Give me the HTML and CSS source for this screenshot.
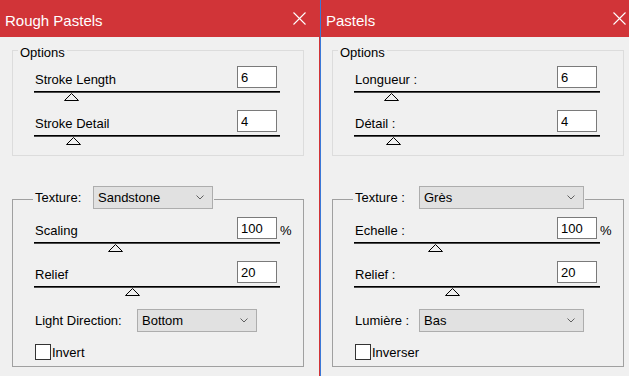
FILE: index.html
```html
<!DOCTYPE html>
<html lang="en">
<head>
  <meta charset="UTF-8">
  <meta name="viewport" content="width=device-width, initial-scale=1.0">
  <title>Rough Pastels</title>
  <link rel="stylesheet" href="styles.css">
</head>
<body>
  <div class="desktop">

    <!-- English dialog -->
    <section class="window">
      <header class="titlebar">
        <span class="title">Rough Pastels</span>
        <svg class="close" width="13" height="13" viewBox="0 0 13 13"><path d="M0.5 0.5 L12.5 12.5 M12.5 0.5 L0.5 12.5"/></svg>
      </header>
      <div class="window-body">
        <fieldset class="group">
          <legend class="group-title">Options</legend>
          <div class="field">
            <span class="field-label">Stroke Length</span>
            <input class="num" type="text" value="6">
          </div>
          <div class="slider">
            <div class="track"></div>
            <svg class="thumb" style="margin-left: 30px" viewBox="0 0 15 8"><polygon points="0.5,7.5 7.5,0.5 14.5,7.5"/></svg>
          </div>
          <div class="field">
            <span class="field-label">Stroke Detail</span>
            <input class="num" type="text" value="4">
          </div>
          <div class="slider">
            <div class="track"></div>
            <svg class="thumb" style="margin-left: 32px" viewBox="0 0 15 8"><polygon points="0.5,7.5 7.5,0.5 14.5,7.5"/></svg>
          </div>
        </fieldset>

        <fieldset class="group group--texture">
          <legend class="group-head">
            <div class="combo-row">
              <span class="combo-label label-texture">Texture:</span>
              <div class="combo">
                <span>Sandstone</span>
                <svg class="chevron" viewBox="0 0 8 5"><polyline points="0.5,0.5 4,4 7.5,0.5"/></svg>
              </div>
            </div>
          </legend>
          <div class="field">
            <span class="field-label">Scaling</span>
            <input class="num" type="text" value="100">
            <span class="unit">%</span>
          </div>
          <div class="slider">
            <div class="track"></div>
            <svg class="thumb" style="margin-left: 74px" viewBox="0 0 15 8"><polygon points="0.5,7.5 7.5,0.5 14.5,7.5"/></svg>
          </div>
          <div class="field">
            <span class="field-label">Relief</span>
            <input class="num" type="text" value="20">
          </div>
          <div class="slider">
            <div class="track"></div>
            <svg class="thumb" style="margin-left: 91px" viewBox="0 0 15 8"><polygon points="0.5,7.5 7.5,0.5 14.5,7.5"/></svg>
          </div>
          <div class="combo-row light-row">
            <span class="combo-label label-light">Light Direction:</span>
            <div class="combo">
              <span>Bottom</span>
              <svg class="chevron" viewBox="0 0 8 5"><polyline points="0.5,0.5 4,4 7.5,0.5"/></svg>
            </div>
          </div>
          <label class="check"><span class="box"></span>Invert</label>
        </fieldset>
      </div>
    </section>

    <!-- French dialog -->
    <section class="window window--fr">
      <header class="titlebar">
        <span class="title">Pastels</span>
        <svg class="close" width="13" height="13" viewBox="0 0 13 13"><path d="M0.5 0.5 L12.5 12.5 M12.5 0.5 L0.5 12.5"/></svg>
      </header>
      <div class="window-body">
        <fieldset class="group">
          <legend class="group-title">Options</legend>
          <div class="field">
            <span class="field-label">Longueur :</span>
            <input class="num" type="text" value="6">
          </div>
          <div class="slider">
            <div class="track"></div>
            <svg class="thumb" style="margin-left: 30px" viewBox="0 0 15 8"><polygon points="0.5,7.5 7.5,0.5 14.5,7.5"/></svg>
          </div>
          <div class="field">
            <span class="field-label">Détail :</span>
            <input class="num" type="text" value="4">
          </div>
          <div class="slider">
            <div class="track"></div>
            <svg class="thumb" style="margin-left: 32px" viewBox="0 0 15 8"><polygon points="0.5,7.5 7.5,0.5 14.5,7.5"/></svg>
          </div>
        </fieldset>

        <fieldset class="group group--texture">
          <legend class="group-head">
            <div class="combo-row">
              <span class="combo-label">Texture :</span>
              <div class="combo">
                <span>Grès</span>
                <svg class="chevron" viewBox="0 0 8 5"><polyline points="0.5,0.5 4,4 7.5,0.5"/></svg>
              </div>
            </div>
          </legend>
          <div class="field">
            <span class="field-label">Echelle :</span>
            <input class="num" type="text" value="100">
            <span class="unit">%</span>
          </div>
          <div class="slider">
            <div class="track"></div>
            <svg class="thumb" style="margin-left: 74px" viewBox="0 0 15 8"><polygon points="0.5,7.5 7.5,0.5 14.5,7.5"/></svg>
          </div>
          <div class="field">
            <span class="field-label">Relief :</span>
            <input class="num" type="text" value="20">
          </div>
          <div class="slider">
            <div class="track"></div>
            <svg class="thumb" style="margin-left: 91px" viewBox="0 0 15 8"><polygon points="0.5,7.5 7.5,0.5 14.5,7.5"/></svg>
          </div>
          <div class="combo-row light-row">
            <span class="combo-label">Lumière :</span>
            <div class="combo">
              <span>Bas</span>
              <svg class="chevron" viewBox="0 0 8 5"><polyline points="0.5,0.5 4,4 7.5,0.5"/></svg>
            </div>
          </div>
          <label class="check"><span class="box"></span>Inverser</label>
        </fieldset>
      </div>
    </section>

  </div>
</body>
</html>
```

FILE: styles.css
```css
:root {
  --title-red: #d13438;
  --face: #f0f0f0;
  --group-light: #dcdcdc;
  --group-dark: #a0a0a0;
  --edit-border: #7a7a7a;
}

html, body {
  margin: 0;
  padding: 0;
}

body {
  font-family: "Liberation Sans", Arial, sans-serif;
  font-size: 13px;
  color: #000;
  background-color: var(--face);
  overflow: hidden;
}

.desktop {
  display: flex;
  width: 629px;
  height: 376px;
  overflow: hidden;
}

.window {
  flex: none;
  width: 320px;
  height: 376px;
  box-sizing: border-box;
  background-color: var(--face);
  border-right: 1px solid var(--title-red);
}

.window--fr {
  width: 319px;
  border-right: none;
  border-left: 1px solid #3b78d8;
}

.titlebar {
  display: flex;
  align-items: center;
  justify-content: space-between;
  height: 37px;
  padding: 0 13px 0 5px;
  box-sizing: border-box;
  background-color: var(--title-red);
  color: white;
}

.title {
  font-size: 15px;
  line-height: 33px;
  padding-top: 4px;
}

.close {
  display: block;
  fill: none;
  stroke: white;
  stroke-width: 1.1;
}

.window-body {
  padding: 4px 0 0 12px;
}

.window--fr .window-body {
  padding-left: 11px;
}

/* group boxes */
.group {
  width: 292px;
  min-width: 0;
  box-sizing: border-box;
  margin: 0;
  padding: 6px 0 1px 5px;
  border: 1px solid var(--group-light);
}

.group-title {
  padding: 4px 2px 0;
  line-height: 15px;
}

.group--texture {
  margin-top: 30px;
  padding-top: 4px;
  padding-bottom: 6px;
  border-color: var(--group-dark);
}

.group-head {
  margin-left: 15px;
  padding: 0 1px 4px 2px;
}

/* label + edit box rows */
.field {
  display: grid;
  grid-template-columns: 1fr 40px 14px;
  align-items: end;
  width: 256px;
  height: 22px;
  margin-left: 17px;
}

.field-label,
.unit {
  line-height: 15px;
  margin-bottom: 1px;
}

.unit {
  padding-left: 3px;
}

.num {
  width: 40px;
  height: 22px;
  margin: 0;
  padding: 0 3px;
  box-sizing: border-box;
  border: 1px solid var(--edit-border);
  background-color: white;
  font: inherit;
  color: #000;
  outline: none;
}

/* sliders */
.slider {
  width: 246px;
  height: 19px;
  margin: 3px 0 0 16px;
}

.track {
  height: 1px;
  background-color: #000;
  border-bottom: 1px solid #4a4a4a;
}

.thumb {
  display: block;
  width: 15px;
  height: 8px;
  fill: none;
  stroke: #000;
  stroke-width: 1;
}

/* combo boxes */
.combo-row {
  display: flex;
  align-items: center;
}

.combo-label {
  flex: none;
  width: 64px;
  line-height: 15px;
}

.label-texture {
  width: 58px;
}

.label-light {
  width: 102px;
}

.combo {
  display: flex;
  align-items: center;
  justify-content: space-between;
  width: 120px;
  height: 23px;
  padding: 0 8px 0 4px;
  box-sizing: border-box;
  border: 1px solid #adadad;
  background-color: #e1e1e1;
  line-height: 15px;
}

.window--fr .combo {
  width: 165px;
}

.chevron {
  display: block;
  width: 8px;
  height: 5px;
  fill: none;
  stroke: #606060;
  stroke-width: 1;
}

.light-row {
  margin: 4px 0 0 17px;
}

/* checkbox */
.check {
  display: flex;
  align-items: center;
  gap: 1px;
  margin: 12px 0 0 17px;
  line-height: 15px;
}

.box {
  width: 16px;
  height: 16px;
  box-sizing: border-box;
  border: 1px solid #333;
  background-color: white;
}
```
